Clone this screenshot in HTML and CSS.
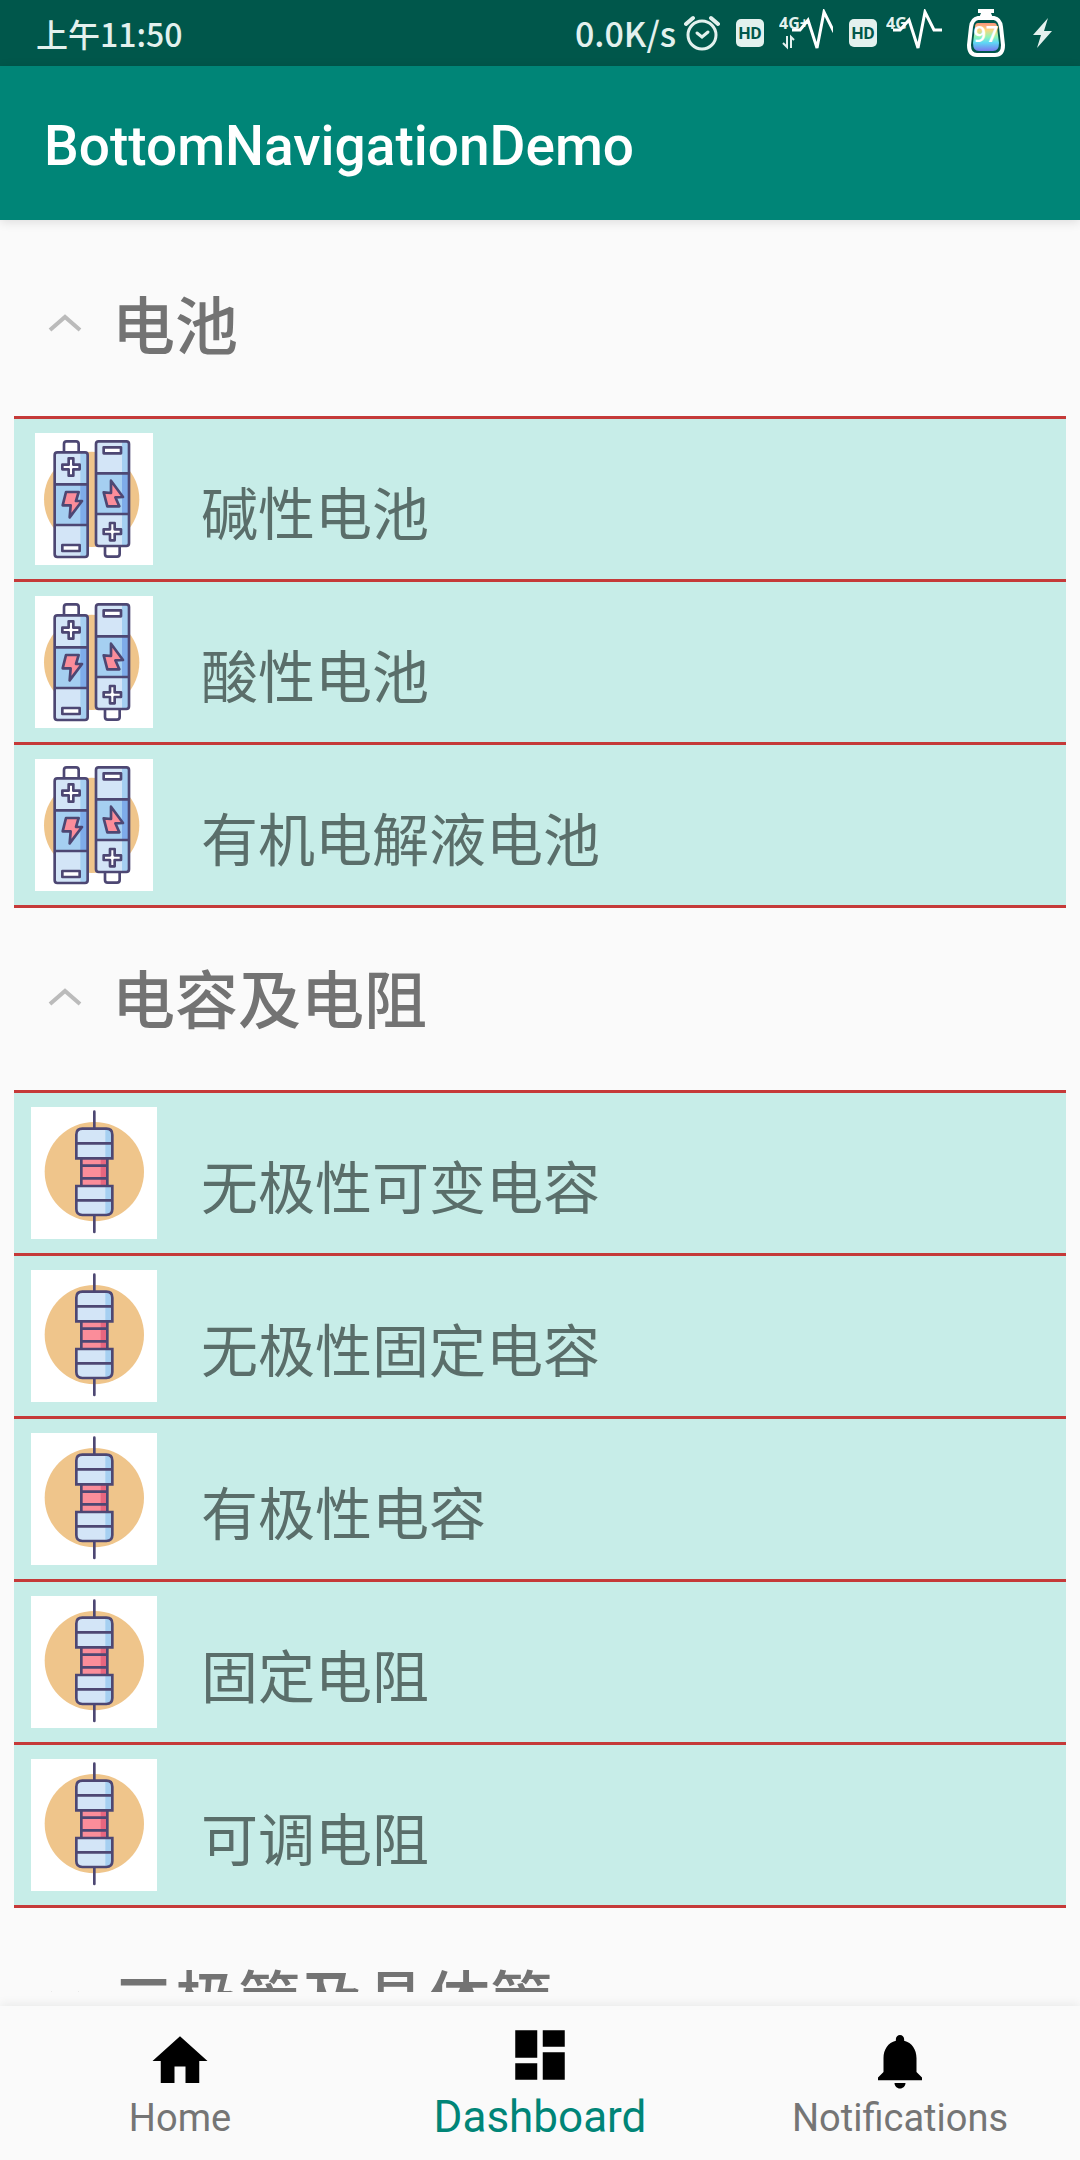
FILE: index.html
```html
<!DOCTYPE html>
<html lang="zh-CN">
<head>
<meta charset="utf-8">
<meta name="viewport" content="width=device-width, initial-scale=1">
<title>BottomNavigationDemo</title>
<link rel="stylesheet" href="styles.css">
</head>
<body>
<svg class="sprite" aria-hidden="true">
  <symbol id="battery" viewBox="45 39 354 396">
    <rect x="45" y="39" width="354" height="396" fill="#fff"/>
    <circle cx="215" cy="238" r="143" fill="#efc58b"/>
    <rect x="132" y="64" width="44" height="34" rx="8" fill="#fff"/>
    <rect x="105" y="97" width="97" height="313" rx="8" fill="#d3e5f7"/>
    <rect x="181" y="97" width="21" height="313" fill="#a5cff1"/>
    <rect x="105" y="193" width="97" height="122" fill="#a5cff1"/>
    <rect x="181" y="193" width="21" height="122" fill="#7eabe9"/>
    <rect x="255" y="378" width="44" height="32" rx="8" fill="#fff"/>
    <rect x="229" y="65" width="97" height="313" rx="8" fill="#d3e5f7"/>
    <rect x="306" y="65" width="20" height="313" fill="#a5cff1"/>
    <rect x="229" y="160" width="97" height="122" fill="#a5cff1"/>
    <rect x="306" y="160" width="20" height="122" fill="#7eabe9"/>
    <g stroke="#4d4773" stroke-width="8" stroke-linejoin="round" fill="none">
      <path d="M132 97V72q0-8 8-8h28q8 0 8 8v25"/>
      <rect x="104" y="97" width="99" height="314" rx="8"/>
      <path d="M104 193h99M104 315h99"/>
      <path d="M255 378v24q0 8 8 8h28q8 0 8-8v-24"/>
      <rect x="228" y="64" width="99" height="314" rx="8"/>
      <path d="M228 160h99M228 282h99"/>
      <g fill="#fff">
        <path d="M146 115h14v19h19v14h-19v19h-14v-19h-19v-14h19z"/>
        <path d="M270 309h14v19h19v14h-19v19h-14v-19h-19v-14h19z"/>
        <rect x="127" y="375" width="52" height="18"/>
        <rect x="251" y="82" width="52" height="18"/>
      </g>
      <path d="M138 216h38l-8 27h18l-37 49 3-36h-24z" fill="#fb8d9a"/>
      <path d="M273 182l36 49-23 1 12 27h-36l-11-42 22 2z" fill="#fb8d9a"/>
    </g>
  </symbol>
  <symbol id="resistor" viewBox="33 51 378 396">
    <rect x="33" y="51" width="378" height="396" fill="#fff"/>
    <circle cx="223" cy="245" r="149" fill="#efc58b"/>
    <path d="M169 205v-71q0-18 18-18h72q18 0 18 18v71zM169 288h108v69q0 18-18 18h-72q-18 0-18-18z" fill="#d3e5f7"/>
    <path d="M256 116h8q13 4 13 18v71h-21zM256 288h21v69q0 14-13 18h-8z" fill="#a5cff1"/>
    <rect x="184" y="205" width="78" height="83" fill="#fb8d9a"/>
    <rect x="242" y="205" width="20" height="83" fill="#e7667f"/>
    <g stroke="#4d4773" stroke-width="8" stroke-linecap="round" fill="none">
      <path d="M223 65v51M223 376v50"/>
      <path d="M169 205v-71q0-18 18-18h72q18 0 18 18v71zM169 160h108"/>
      <path d="M169 288h108v69q0 18-18 18h-72q-18 0-18-18zM169 331h108"/>
      <path d="M184 207v79M262 207v79M184 227h78M184 265h78"/>
    </g>
  </symbol>
  <symbol id="chevron-up" viewBox="0 0 34 20">
    <path d="M2 17L17 4l15 13" fill="none" stroke="#bbb" stroke-width="4"/>
  </symbol>
  <symbol id="chevron-down" viewBox="0 0 34 20">
    <path d="M2 6l15 13L32 6" fill="none" stroke="#bbb" stroke-width="4"/>
  </symbol>
</svg>

<header class="status">
  <time class="clock">上午11:50</time>
  <div class="indicators">
    <span class="speed">0.0K/s</span>
    <svg class="alarm" width="36" height="36" viewBox="0 0 36 36" fill="none" stroke="#e3f1ee" stroke-width="3" stroke-linecap="round">
      <circle cx="18" cy="20" r="14"/>
      <path d="M13 18l5 4 6-5"/>
      <path d="M2 9l7-6M27 3l7 6" stroke-width="4"/>
    </svg>
    <span class="badge">HD</span>
    <svg class="signal-a" width="54" height="44" viewBox="779 8 54 44">
      <text x="779" y="28" class="net-text">4G+</text>
      <path d="M787 35v11l-4-4M791 47V36l3 3" fill="none" stroke="#e3f1ee" stroke-width="2"/>
      <path d="M792 29h8l8-10 9 28 7-36 10 20" fill="none" stroke="#fff" stroke-width="3"/>
    </svg>
    <span class="badge">HD</span>
    <svg class="signal-b" width="56" height="44" viewBox="886 8 56 44">
      <text x="886" y="28" class="net-text">4G</text>
      <path d="M893 29h7l9-10 9 28 7-36 9 18h8" fill="none" stroke="#fff" stroke-width="3"/>
    </svg>
    <svg class="bottle" width="38" height="50" viewBox="0 0 38 50">
      <defs>
        <linearGradient id="charge" x1="0" y1="0" x2="0" y2="1">
          <stop offset="0" stop-color="#f8937c"/>
          <stop offset=".25" stop-color="#f8d67f"/>
          <stop offset=".5" stop-color="#8df5b8"/>
          <stop offset=".7" stop-color="#5fd8f5"/>
          <stop offset="1" stop-color="#7a78ee"/>
        </linearGradient>
      </defs>
      <path d="M11 15h16q3 0 3 4l2 16q0 8-6 8H12q-6 0-6-8l2-16q0-4 3-4z" fill="url(#charge)"/>
      <path d="M11 10h16q6 1 7 9l2 18q0 10-8 10H10q-8 0-8-10l2-18q1-8 7-9z" fill="none" stroke="#fff" stroke-width="4"/>
      <path d="M11 1h16v4h-3l2 5H12l2-5h-3z" fill="#fff"/>
      <text x="19" y="34" text-anchor="middle" class="charge-text">97</text>
    </svg>
    <svg class="bolt" width="19" height="30" viewBox="0 0 19 30">
      <path d="M15 0L0 17h8L4 30l15-17h-8z" fill="#e3f1ee"/>
    </svg>
  </div>
</header>

<div class="appbar"><h1>BottomNavigationDemo</h1></div>

<main class="list">
  <section>
    <h2><button class="group" type="button" aria-expanded="true"><svg class="chevron"><use href="#chevron-up"/></svg><span class="title">电池</span></button></h2>
    <ul class="items">
      <li><span class="thumb"><svg class="pic-battery"><use href="#battery"/></svg></span><span class="name">碱性电池</span></li>
      <li><span class="thumb"><svg class="pic-battery"><use href="#battery"/></svg></span><span class="name">酸性电池</span></li>
      <li><span class="thumb"><svg class="pic-battery"><use href="#battery"/></svg></span><span class="name">有机电解液电池</span></li>
    </ul>
  </section>
  <section>
    <h2><button class="group" type="button" aria-expanded="true"><svg class="chevron"><use href="#chevron-up"/></svg><span class="title">电容及电阻</span></button></h2>
    <ul class="items">
      <li><span class="thumb"><svg class="pic-resistor"><use href="#resistor"/></svg></span><span class="name">无极性可变电容</span></li>
      <li><span class="thumb"><svg class="pic-resistor"><use href="#resistor"/></svg></span><span class="name">无极性固定电容</span></li>
      <li><span class="thumb"><svg class="pic-resistor"><use href="#resistor"/></svg></span><span class="name">有极性电容</span></li>
      <li><span class="thumb"><svg class="pic-resistor"><use href="#resistor"/></svg></span><span class="name">固定电阻</span></li>
      <li><span class="thumb"><svg class="pic-resistor"><use href="#resistor"/></svg></span><span class="name">可调电阻</span></li>
    </ul>
  </section>
  <section>
    <h2><button class="group" type="button" aria-expanded="false"><svg class="chevron"><use href="#chevron-down"/></svg><span class="title">二极管及晶体管</span></button></h2>
  </section>
</main>

<nav class="tabs">
  <a class="tab" href="#home">
    <svg width="66" height="66" viewBox="0 0 24 24"><path d="M10 20v-6h4v6h5v-8h3L12 3 2 12h3v8z"/></svg>
    <span>Home</span>
  </a>
  <a class="tab active" href="#dashboard" aria-current="page">
    <svg width="66" height="66" viewBox="0 0 24 24"><path d="M3 13h8V3H3v10zM3 21h8v-6H3v6zM13 21h8V11h-8v10zM13 3v6h8V3h-8z"/></svg>
    <span>Dashboard</span>
  </a>
  <a class="tab" href="#notifications">
    <svg width="66" height="66" viewBox="0 0 24 24"><path d="M12 22c1.1 0 2-.9 2-2h-4c0 1.1.89 2 2 2zM18 16v-5c0-3.07-1.64-5.64-4.5-6.32V4c0-.83-.67-1.5-1.5-1.5s-1.5.67-1.5 1.5v.68C7.63 5.36 6 7.92 6 11v5l-2 2v1h16v-1l-2-2z"/></svg>
    <span>Notifications</span>
  </a>
</nav>
</body>
</html>
```
FILE: styles.css
```css
* { box-sizing: border-box; }

body {
  margin: 0;
  height: 100vh;
  display: flex;
  flex-direction: column;
  background: #fafafa;
  font-family: Roboto, "Noto Sans CJK SC", sans-serif;
}

h1, h2, ul { margin: 0; padding: 0; font: inherit; }
svg { display: block; flex: none; }
.sprite { position: absolute; width: 0; height: 0; }

/* status bar */
.status {
  flex: none;
  height: 66px;
  padding: 0 28px 0 36px;
  display: flex;
  align-items: center;
  justify-content: space-between;
  background: #00574b;
  color: #e3f1ee;
  font: 500 34px/66px "Noto Sans CJK SC", sans-serif;
}
.clock { font-size: 32px; }
.indicators { display: flex; align-items: center; }
.alarm { margin-left: 8px; }
.badge {
  width: 28px;
  height: 28px;
  margin-left: 16px;
  border-radius: 5px;
  background: #e3f1ee;
  color: #00574b;
  font: 700 17px/29px Roboto, sans-serif;
  text-align: center;
}
.signal-a { margin: 0 0 4px 15px; }
.signal-b { margin: 0 0 4px 9px; }
.bottle { margin-left: 25px; }
.bolt { margin-left: 28px; }
.net-text { font: 700 16px "Noto Sans", sans-serif; fill: #e3f1ee; }
.charge-text { font: 600 22px "Noto Sans", sans-serif; fill: #fff; }

/* title bar */
.appbar {
  flex: none;
  height: 154px;
  padding: 6px 44px 0;
  display: flex;
  align-items: center;
  background: #008577;
  color: #fff;
  box-shadow: 0 2px 10px rgba(0, 0, 0, .12);
  position: relative;
}
.appbar h1 { font-size: 55px; font-weight: 500; line-height: 64px; }

/* expandable list */
.list {
  flex: 1;
  min-height: 0;
  margin: 14px;
  overflow: hidden;
}
.group {
  width: 100%;
  height: 182px;
  padding: 0 0 0 34px;
  border: 0;
  display: flex;
  align-items: center;
  gap: 30px;
  background: none;
  color: #737373;
  font: 500 63px/92px "Noto Sans CJK SC", sans-serif;
  text-align: left;
}
.title { padding-bottom: 6px; }
.chevron { width: 34px; height: 20px; margin-bottom: 4px; }
.items { list-style: none; border-top: 3px solid #c53a39; }
.items li {
  height: 163px;
  padding: 0 17px;
  padding-left: 17px;
  border-bottom: 3px solid #c53a39;
  display: flex;
  align-items: center;
  gap: 44px;
  background: #c7ede8;
}
.thumb { width: 126px; flex: none; display: flex; justify-content: center; }
.pic-battery { width: 118px; height: 132px; }
.pic-resistor { width: 126px; height: 132px; }
.name {
  padding-top: 22px;
  color: #5a6e6a;
  font: 400 57px/84px "Noto Sans CJK SC", sans-serif;
}

/* bottom navigation */
.tabs {
  flex: none;
  height: 154px;
  display: flex;
  background: #fafafa;
  box-shadow: 0 -2px 10px rgba(0, 0, 0, .07);
  position: relative;
}
.tab {
  flex: 1;
  padding-top: 22px;
  display: flex;
  flex-direction: column;
  align-items: center;
  color: #757575;
  font-size: 38px;
  line-height: 48px;
  text-decoration: none;
}
.tab svg { fill: #000; }
.tab.active { padding-top: 16px; color: #008577; font-size: 44px; line-height: 58px; }
```
